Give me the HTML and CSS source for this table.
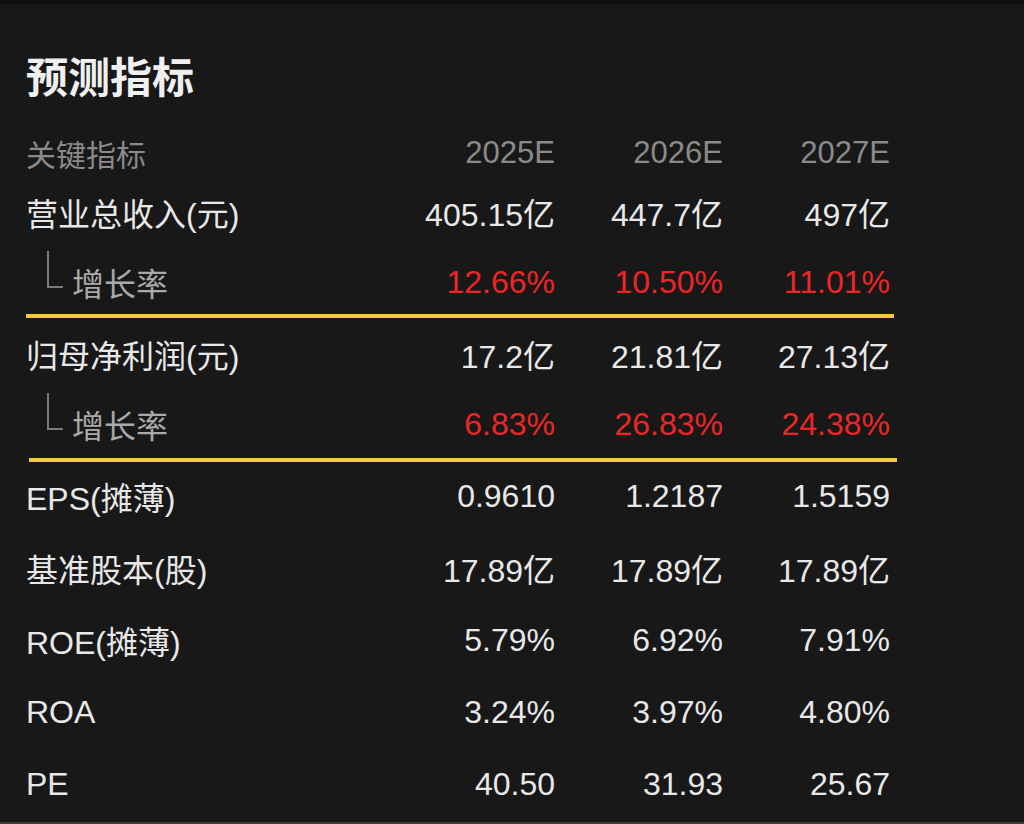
FILE: index.html
```html
<!DOCTYPE html>
<html lang="zh">
<head>
<meta charset="utf-8">
<link rel="stylesheet" href="styles.css">
</head>
<body>
<div class="page">
  <h1 class="title">预测指标</h1>
  <div class="table">
    <div class="row head">
      <div class="label">关键指标</div>
      <div class="val">2025E</div>
      <div class="val">2026E</div>
      <div class="val">2027E</div>
    </div>
    <div class="row">
      <div class="label">营业总收入(元)</div>
      <div class="val">405.15亿</div>
      <div class="val">447.7亿</div>
      <div class="val">497亿</div>
    </div>
    <div class="row growth">
      <div class="label"><span class="corner"></span>增长率</div>
      <div class="val red">12.66%</div>
      <div class="val red">10.50%</div>
      <div class="val red">11.01%</div>
    </div>
    <div class="divider"></div>
    <div class="row">
      <div class="label">归母净利润(元)</div>
      <div class="val">17.2亿</div>
      <div class="val">21.81亿</div>
      <div class="val">27.13亿</div>
    </div>
    <div class="row growth">
      <div class="label"><span class="corner"></span>增长率</div>
      <div class="val red">6.83%</div>
      <div class="val red">26.83%</div>
      <div class="val red">24.38%</div>
    </div>
    <div class="divider second"></div>
    <div class="row">
      <div class="label">EPS(摊薄)</div>
      <div class="val">0.9610</div>
      <div class="val">1.2187</div>
      <div class="val">1.5159</div>
    </div>
    <div class="row">
      <div class="label">基准股本(股)</div>
      <div class="val">17.89亿</div>
      <div class="val">17.89亿</div>
      <div class="val">17.89亿</div>
    </div>
    <div class="row">
      <div class="label">ROE(摊薄)</div>
      <div class="val">5.79%</div>
      <div class="val">6.92%</div>
      <div class="val">7.91%</div>
    </div>
    <div class="row">
      <div class="label">ROA</div>
      <div class="val">3.24%</div>
      <div class="val">3.97%</div>
      <div class="val">4.80%</div>
    </div>
    <div class="row">
      <div class="label">PE</div>
      <div class="val">40.50</div>
      <div class="val">31.93</div>
      <div class="val">25.67</div>
    </div>
  </div>
</div>
</body>
</html>
```
FILE: styles.css
```css
html, body {
  margin: 0;
  padding: 0;
  background: #181818;
}
body {
  font-family: "Liberation Sans", "Noto Sans CJK SC", sans-serif;
  color: #e8e8e8;
  height: 824px;
  overflow: hidden;
}
.page {
  box-sizing: border-box;
  height: 824px;
  border-top: 4px solid #0e0e0e;
  border-bottom: 2px solid #3a3a3a;
  padding: 46px 0 0 26px;
}
.title {
  margin: 0;
  font-family: "Noto Sans CJK SC", sans-serif;
  font-size: 42px;
  font-weight: 700;
  line-height: 50px;
  color: #f0f0f0;
}
.table {
  margin-top: 18px;
  width: 869px;
  display: flex;
  flex-direction: column;
}
.row {
  display: grid;
  grid-template-columns: 361px 168px 168px 167px;
  height: 72px;
  align-items: center;
  font-size: 32px;
}
.row .label {
  font-family: "Liberation Sans", "Noto Sans CJK SC", sans-serif;
  font-size: 32px;
  display: flex;
  align-items: center;
  white-space: nowrap;
}
.val {
  text-align: right;
  white-space: nowrap;
}
.head {
  height: 58px;
  padding-top: 12px;
  box-sizing: border-box;
  color: #8a8a8a;
  font-size: 31px;
}
.head .label {
  font-size: 30px;
}
.growth {
  height: 66px;
  padding-top: 2px;
  box-sizing: border-box;
}
.growth .label {
  color: #a9a9a9;
  padding-left: 21px;
  font-size: 32px;
}
.corner {
  width: 14px;
  height: 35px;
  border-left: 2px solid #7a7a7a;
  border-bottom: 2px solid #7a7a7a;
  margin-right: 9px;
  margin-bottom: 26px;
}
.red {
  color: #ec2626;
}
.divider {
  height: 4px;
  background: #f4c841;
  width: 868px;
}
.divider.second {
  margin-top: 2px;
  margin-left: 3px;
  margin-bottom: -2px;
}
```
